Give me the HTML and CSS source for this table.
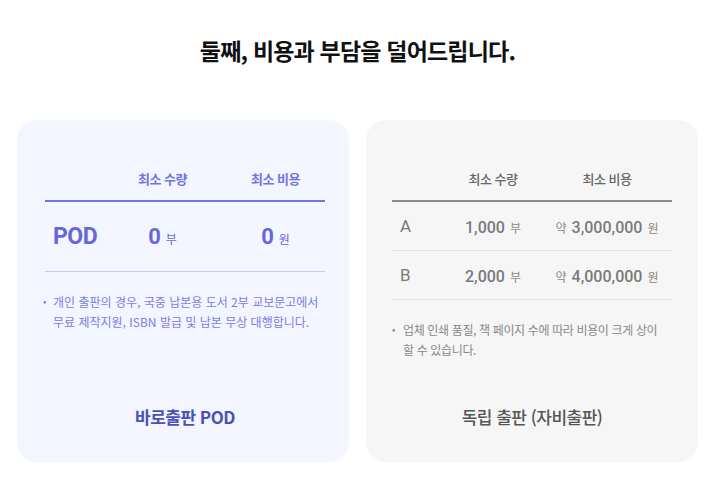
FILE: index.html
```html
<!DOCTYPE html>
<html lang="ko">
<head>
	<meta charset="UTF-8">
	<title>비용과 부담</title>
	<link rel="stylesheet" href="styles.css">
</head>
<body>
<div class="section">
	<h2 class="title">둘째, 비용과 부담을 덜어드립니다.</h2>
	<div class="cards">
		<div class="card pod">
			<div class="table">
				<div class="row head">
					<span></span><span>최소 수량</span><span>최소 비용</span>
				</div>
				<div class="row big">
					<span class="label">POD</span>
					<span class="val"><b>0</b><i>부</i></span>
					<span class="val"><b>0</b><i>원</i></span>
				</div>
			</div>
			<p class="note">개인 출판의 경우, 국중 납본용 도서 2부 교보문고에서<br>무료 제작지원, ISBN 발급 및 납본 무상 대행합니다.</p>
			<h3 class="card-title">바로출판 POD</h3>
		</div>
		<div class="card self">
			<div class="table">
				<div class="row head">
					<span></span><span>최소 수량</span><span>최소 비용</span>
				</div>
				<div class="row">
					<span class="label">A</span>
					<span class="val"><b>1,000</b><i>부</i></span>
					<span class="val"><i class="pre">약</i><b>3,000,000</b><i>원</i></span>
				</div>
				<div class="row">
					<span class="label">B</span>
					<span class="val"><b>2,000</b><i>부</i></span>
					<span class="val"><i class="pre">약</i><b>4,000,000</b><i>원</i></span>
				</div>
			</div>
			<p class="note">업체 인쇄 품질, 책 페이지 수에 따라 비용이 크게 상이<br>할 수 있습니다.</p>
			<h3 class="card-title">독립 출판 (자비출판)</h3>
		</div>
	</div>
</div>
</body>
</html>
```

FILE: styles.css
```css
* {
	margin: 0;
	padding: 0;
	box-sizing: border-box;
}

body {
	background: #fff;
	font-family: "Noto Sans CJK KR", "Noto Sans", sans-serif;
	color: #111;
}

.section {
	padding: 34px 17px 0;
}

.title {
	text-align: center;
	font-size: 23px;
	line-height: 32px;
	font-weight: 700;
	letter-spacing: -0.035em;
	color: #111;
}

.cards {
	display: flex;
	gap: 17px;
	margin-top: 54px;
}

.card {
	flex: 1;
	height: 342px;
	border-radius: 20px;
	padding: 48px 26px 33px;
	display: flex;
	flex-direction: column;
}

.pod {
	background: #f4f6ff;
	padding-left: 28px;
	padding-right: 24px;
}

.self {
	background: #f6f6f6;
}

.row {
	display: grid;
	align-items: center;
	text-align: center;
}

.pod .row {
	grid-template-columns: 54px 127px 1fr;
}

.self .row {
	grid-template-columns: 52px 98px 1fr;
}

.row.head {
	font-size: 13px;
	line-height: 22px;
	font-weight: 700;
	letter-spacing: -0.04em;
	padding-bottom: 10px;
	border-bottom: 2px solid #7373e6;
}

.pod .row.head {
	color: #7373e3;
}

.self .row.head {
	color: #666;
	font-weight: 500;
	border-bottom-color: #8a8a8a;
}

.row .label {
	text-align: left;
	padding-left: 8px;
	font-family: Roboto, "Noto Sans CJK KR", sans-serif;
}

.val b {
	font-family: Roboto, "Noto Sans CJK KR", sans-serif;
}

.val i {
	font-style: normal;
	font-size: 12px;
	margin-left: 5px;
}

.val i.pre {
	margin-left: 0;
	margin-right: 5px;
}

.pod .row.big {
	height: 70px;
	border-bottom: 1px solid #c9caf2;
	color: #6767d9;
}

.pod .row.big .label {
	font-size: 23px;
	font-weight: 700;
	letter-spacing: -0.02em;
}

.pod .row.big b {
	font-size: 22px;
	font-weight: 700;
}

.self .row:not(.head) {
	height: 49px;
	border-bottom: 1px solid #e4e4e4;
	color: #7a7a7a;
}

.self .row .label {
	font-size: 17px;
}

.self .row b {
	font-size: 16px;
	font-weight: 500;
}

.self .val i {
	color: #8a8a8a;
}

.note {
	position: relative;
	margin-top: 20px;
	padding-left: 8px;
	font-size: 12px;
	line-height: 20px;
}

.note::before {
	content: "•";
	position: absolute;
	left: -2px;
	top: -1px;
	font-size: 10px;
}

.pod .note {
	color: #7c7ce6;
}

.self .note {
	color: #888;
	letter-spacing: -0.03em;
	padding-left: 9px;
	margin-left: 2px;
}

.card-title {
	margin-top: auto;
	text-align: center;
	font-size: 17px;
	line-height: 24px;
	letter-spacing: -0.03em;
}

.pod .card-title {
	color: #4b50b6;
	font-weight: 700;
}

.self .card-title {
	color: #555;
	font-weight: 500;
}
```
